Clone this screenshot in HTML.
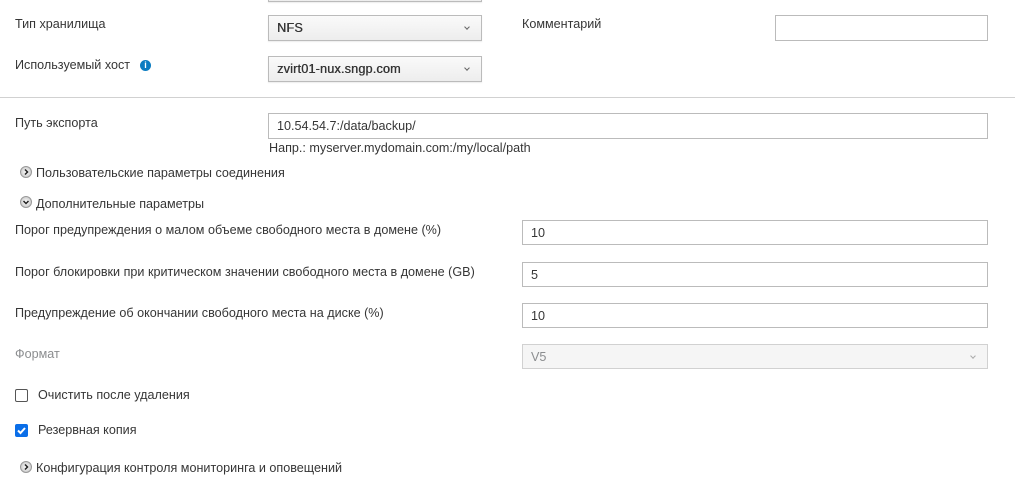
<!DOCTYPE html><html><head><meta charset="utf-8"><style>
body{margin:0;width:1015px;height:485px;background:#fff;position:relative;overflow:hidden;font-family:"Liberation Sans","DejaVu Sans",sans-serif;font-size:12.6px;color:#363636}
.a{position:absolute;white-space:nowrap}
.box{position:absolute;border:1px solid #bbb;box-sizing:border-box;background:#fff;padding-left:8px;display:flex;align-items:center;color:#363636}
.sel{background:linear-gradient(#fafafa,#ededed);border-color:#bbb;box-shadow:0 1px 1px rgba(0,0,0,.08);text-shadow:0.4px 0 0 #363636;letter-spacing:.2px}
.chev{position:absolute;right:12px;top:9px;width:3px;height:3px;border-right:1px solid #666;border-bottom:1px solid #666;transform:rotate(45deg)}
.tg{position:absolute;width:12px;height:12px;border-radius:50%;background:radial-gradient(#fff,#bbb);border:1px solid #999;box-sizing:border-box}
.tg svg{position:absolute;left:0;top:0}
</style></head><body>
<div class="box sel" style="left:268px;top:-10px;width:214px;height:12px"></div>
<div class="a" style="left:15px;top:17px">Тип хранилища</div>
<div class="box sel" style="left:268px;top:15px;width:214px;height:26px">NFS<span class="chev"></span></div>
<div class="a" style="left:522px;top:17px">Комментарий</div>
<div class="box" style="left:775px;top:15px;width:213px;height:26px"></div>
<div class="a" style="left:15px;top:58px">Используемый хост</div>
<div class="a" style="left:140px;top:60px;width:11px;height:11px;border-radius:50%;background:#0b7cc1;color:#fff;font-size:9px;font-weight:bold;text-align:center;line-height:11px">i</div>
<div class="box sel" style="left:268px;top:56px;width:214px;height:26px">zvirt01-nux.sngp.com<span class="chev"></span></div>
<div class="a" style="left:0;top:97px;width:1015px;height:1px;background:#d1d1d1"></div>
<div class="a" style="left:15px;top:116px">Путь экспорта</div>
<div class="box" style="left:268px;top:113px;width:720px;height:26px">10.54.54.7:/data/backup/</div>
<div class="a" style="left:269px;top:141px">Напр.: myserver.mydomain.com:/my/local/path</div>
<div class="tg" style="left:20px;top:166px"><svg width="10" height="10"><path d="M4 2.5l2.5 2.5-2.5 2.5" stroke="#222" stroke-width="1.5" fill="none"/></svg></div>
<div class="a" style="left:36px;top:166px">Пользовательские параметры соединения</div>
<div class="tg" style="left:20px;top:196px"><svg width="10" height="10"><path d="M2.5 4l2.5 2.5 2.5-2.5" stroke="#222" stroke-width="1.5" fill="none"/></svg></div>
<div class="a" style="left:36px;top:197px">Дополнительные параметры</div>
<div class="a" style="left:15px;top:223px">Порог предупреждения о малом объеме свободного места в домене (%)</div>
<div class="box" style="left:522px;top:220px;width:466px;height:25px">10</div>
<div class="a" style="left:15px;top:265px">Порог блокировки при критическом значении свободного места в домене (GB)</div>
<div class="box" style="left:522px;top:262px;width:466px;height:25px">5</div>
<div class="a" style="left:15px;top:306px">Предупреждение об окончании свободного места на диске (%)</div>
<div class="box" style="left:522px;top:303px;width:466px;height:25px">10</div>
<div class="a" style="left:15px;top:347px;color:#8b8d8f">Формат</div>
<div class="box" style="left:522px;top:344px;width:466px;height:25px;background:#f5f5f5;border-color:#d1d1d1;color:#8b8d8f">V5<span class="chev" style="border-color:#aaa"></span></div>
<div class="a" style="left:15px;top:389px;width:13px;height:13px;border:1px solid #555;border-radius:2px;box-sizing:border-box"></div>
<div class="a" style="left:38px;top:388px">Очистить после удаления</div>
<div class="a" style="left:15px;top:424px;width:13px;height:13px;background:#0a6ee8;border-radius:2px"><svg width="13" height="13"><path d="M3 6.5l2.5 2.5 4.5-5" stroke="#fff" stroke-width="2" fill="none"/></svg></div>
<div class="a" style="left:38px;top:423px">Резервная копия</div>
<div class="tg" style="left:20px;top:461px"><svg width="10" height="10"><path d="M4 2.5l2.5 2.5-2.5 2.5" stroke="#222" stroke-width="1.5" fill="none"/></svg></div>
<div class="a" style="left:36px;top:461px">Конфигурация контроля мониторинга и оповещений</div>
</body></html>
